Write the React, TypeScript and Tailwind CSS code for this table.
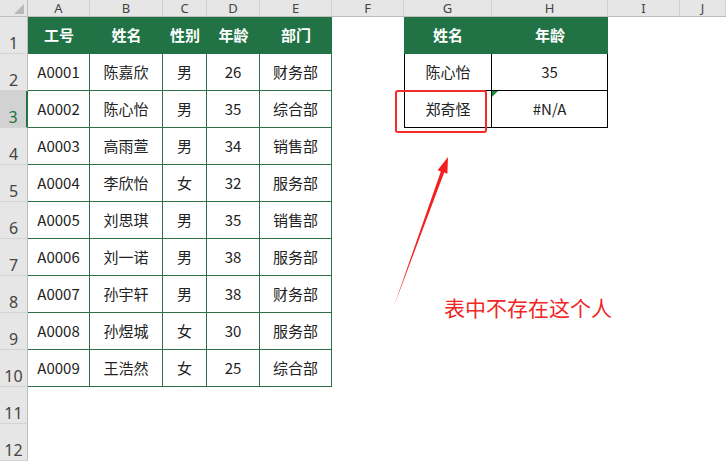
import React from "react";

const cols = ["A", "B", "C", "D", "E", "F", "G", "H", "I", "J"];
const gridCols =
  "grid grid-cols-[28px_62px_73px_44px_53px_72px_72px_88px_116px_72px_46px]";

const head = ["工号", "姓名", "性别", "年龄", "部门"];
const data = [
  ["A0001", "陈嘉欣", "男", "26", "财务部"],
  ["A0002", "陈心怡", "男", "35", "综合部"],
  ["A0003", "高雨萱", "男", "34", "销售部"],
  ["A0004", "李欣怡", "女", "32", "服务部"],
  ["A0005", "刘思琪", "男", "35", "销售部"],
  ["A0006", "刘一诺", "男", "38", "服务部"],
  ["A0007", "孙宇轩", "男", "38", "财务部"],
  ["A0008", "孙煜城", "女", "30", "服务部"],
  ["A0009", "王浩然", "女", "25", "综合部"],
];

const font = "font-['Microsoft_YaHei','Noto_Sans_CJK_SC',sans-serif]";

/* row header on the left */
const RowHead = ({ n }: { n: number }) => (
  <div
    className={`flex items-end justify-center pb-[1px] border-b border-[#d4d4d4] text-[16px] leading-[18px] font-['Noto_Sans',sans-serif] ${
      n === 3
        ? "bg-[#d2d2d2] text-[#217346] border-r-2 border-r-[#217346]"
        : "bg-[#e6e6e6] text-[#444] border-r border-r-[#bdbdbd]"
    }`}
  >
    {n}
  </div>
);

const Green = ({ t }: { t: string }) => (
  <div className="flex items-center justify-center bg-[#217346] text-white font-bold text-[15px]">
    {t}
  </div>
);

const Cell = ({ t, cls = "" }: { t: string; cls?: string }) => (
  <div className={`flex items-center justify-center text-[15px] text-[#222] ${cls}`}>
    {t}
  </div>
);

const Empty = () => <div />;

export default function App() {
  const rows: React.ReactNode[] = [];

  for (let r = 1; r <= 12; r++) {
    const cells: React.ReactNode[] = [<RowHead key="h" n={r} />];

    // A..E
    if (r === 1) {
      head.forEach((h, i) => cells.push(<Green key={i} t={h} />));
    } else if (r <= 10) {
      data[r - 2].forEach((v, i) =>
        cells.push(
          <Cell key={i} t={v} cls="border-r border-b border-[#2e6f4a]" />
        )
      );
    } else {
      for (let i = 0; i < 5; i++) cells.push(<Empty key={i} />);
    }

    // F
    cells.push(<Empty key="f" />);

    // G, H
    if (r === 1) {
      cells.push(<Green key="g" t="姓名" />);
      cells.push(<Green key="hh" t="年龄" />);
    } else if (r === 2) {
      cells.push(<Cell key="g" t="陈心怡" cls="border-l border-r border-b border-black" />);
      cells.push(<Cell key="hh" t="35" cls="border-r border-b border-black" />);
    } else if (r === 3) {
      cells.push(<Cell key="g" t="郑奇怪" cls="border-l border-r border-b border-black" />);
      cells.push(
        <div key="hh" className="relative flex items-center justify-center text-[15px] text-[#222] border-r border-b border-black">
          <span className="absolute left-0 top-0 w-0 h-0 border-t-[6px] border-t-[#1e8a3c] border-r-[6px] border-r-transparent" />
          #N/A
        </div>
      );
    } else {
      cells.push(<Empty key="g" />);
      cells.push(<Empty key="hh" />);
    }

    // I, J
    cells.push(<Empty key="i" />);
    cells.push(<Empty key="j" />);

    rows.push(
      <div key={r} className={`${gridCols} h-[37px]`}>
        {cells}
      </div>
    );
  }

  return (
    <div className={`relative w-[726px] h-[462px] overflow-hidden bg-white ${font}`}>
      {/* column letters */}
      <div className={`${gridCols} h-[17px] bg-[#e6e6e6] border-b border-[#bdbdbd]`}>
        <div className="relative border-r border-[#bdbdbd]">
          <span className="absolute right-[3px] bottom-[2px] w-0 h-0 border-b-[10px] border-b-[#b9b9b9] border-l-[10px] border-l-transparent" />
        </div>
        {cols.map((c) => (
          <div
            key={c}
            className="flex items-center justify-center border-r border-[#d0d0d0] text-[13px] leading-[16px] text-[#444] font-['Noto_Sans',sans-serif]"
          >
            {c}
          </div>
        ))}
      </div>

      {rows}

      {/* red highlight box */}
      <div className="absolute left-[395px] top-[90px] w-[92px] h-[43px] border-2 border-[#f32b2b] rounded-[3px]" />

      {/* arrow */}
      <svg className="absolute left-0 top-0" width="726" height="462" viewBox="0 0 726 462">
        <polygon
          points="394,306 440.8,171.4 437.6,170.2 448,157 447.4,173.8 444.2,172.6"
          fill="#f41f1f"
        />
      </svg>

      {/* note */}
      <div className="absolute left-[444px] top-[294px] text-[21px] leading-[26px] text-[#f02525] whitespace-nowrap font-['Microsoft_YaHei','Noto_Sans_CJK_SC',sans-serif]">
        表中不存在这个人
      </div>
    </div>
  );
}
